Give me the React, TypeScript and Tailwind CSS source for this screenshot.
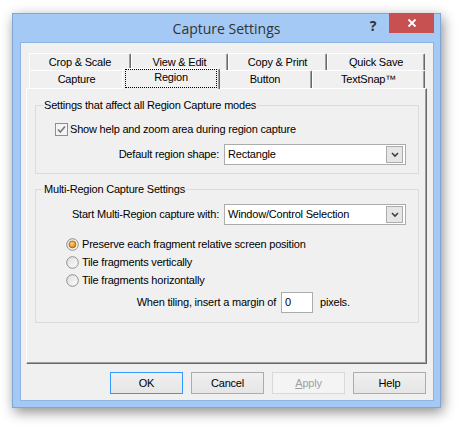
import React from "react";

const body = { fontFamily: '"Liberation Sans", Arial, sans-serif' };

function Tab({ label, w, h, selected }: { label: string; w: string; h: string; selected?: boolean }) {
  if (selected) {
    return (
      <div className={`${w} h-[21px] -mx-[2px] -mt-[2px] -mb-[1px] relative z-10 bg-[#f0f0f0] border-t border-l border-white border-r border-r-[#696969] shadow-[inset_-1px_0_0_#a0a0a0] rounded-t-[2px] px-[2px] pt-[0px] pb-[1px]`}>
        <div className="h-[19px] border border-dotted border-black flex items-center justify-center pb-[2px]">{label}</div>
      </div>
    );
  }
  return (
    <div className={`${w} ${h} bg-[#f0f0f0] border-t border-l border-white border-r border-r-[#696969] shadow-[inset_-1px_0_0_#a0a0a0] rounded-t-[2px] flex items-center justify-center`}>
      {label}
    </div>
  );
}

function Combo({ value }: { value: string }) {
  return (
    <div className="w-[182px] h-[21px] bg-white border border-[#acacac] flex items-center justify-between pl-[3px] pr-[2px]">
      <span>{value}</span>
      <div className="w-[17px] h-[17px] border border-[#acacac] bg-[#e6e6e6] flex items-center justify-center">
        <svg width="8" height="6" viewBox="0 0 8 6">
          <path d="M1 1 L4 4 L7 1" fill="none" stroke="#404040" strokeWidth="1.6" />
        </svg>
      </div>
    </div>
  );
}

function Radio({ checked }: { checked?: boolean }) {
  return (
    <svg width="13" height="13" viewBox="0 0 13 13">
      <defs>
        <linearGradient id="rg" x1="0" y1="0" x2="1" y2="1">
          <stop offset="0" stopColor="#dcdcdc" />
          <stop offset="1" stopColor="#ffffff" />
        </linearGradient>
        <radialGradient id="ro" cx="0.4" cy="0.35" r="0.7">
          <stop offset="0" stopColor="#ffd27a" />
          <stop offset="1" stopColor="#e07b00" />
        </radialGradient>
      </defs>
      <circle cx="6.5" cy="6.5" r="5.8" fill="url(#rg)" stroke="#8f8f8f" strokeWidth="1" />
      {checked && <circle cx="6.5" cy="6.5" r="3.4" fill="url(#ro)" stroke="#a85a10" strokeWidth="0.8" />}
    </svg>
  );
}

function Btn({ label, focused, disabled }: { label: React.ReactNode; focused?: boolean; disabled?: boolean }) {
  const border = focused ? "border-[#3399ff]" : disabled ? "border-[#d9d9d9]" : "border-[#acacac]";
  const bg = disabled ? "bg-[#f4f4f4] text-[#a0a0a0]" : "bg-gradient-to-b from-[#f0f0f0] to-[#e5e5e5] text-black";
  return (
    <div className={`w-[73px] h-[22px] border ${border} ${bg} flex items-center justify-center`}>{label}</div>
  );
}

export default function App() {
  return (
    <div className="w-[461px] h-[429px] bg-white pt-[13px] pl-[12px] text-[11px] tracking-[-0.2px] text-black" style={body}>
      <div className="w-[429px] h-[395px] border border-[#7fa6d4] bg-[#a4c9f4] shadow-[2px_4px_12px_rgba(0,0,0,0.45)] flex flex-col">
        <div className="h-[28px] flex items-start">
          <div className="flex-1 h-[28px] flex items-center justify-center text-[14px] tracking-normal text-[#333] pt-[1px]" style={{ fontFamily: '"Open Sans", "Noto Sans", sans-serif' }}>
            <span className="ml-[74px]">Capture Settings</span>
          </div>
          <div className="w-[14px] h-[20px] flex items-center justify-center text-[14px] font-bold text-[#333] mt-[1px]" style={{ fontFamily: '"Noto Sans", sans-serif' }}>?</div>
          <div className="w-[45px] h-[20px] bg-[#c75050] ml-[9px] mr-[6px] -mt-px flex items-center justify-center">
            <svg width="10" height="10" viewBox="0 0 10 10">
              <path d="M1.5 1.5 L8.5 8.5 M8.5 1.5 L1.5 8.5" stroke="white" strokeWidth="1.8" />
            </svg>
          </div>
        </div>
        <div className="ml-[7px] w-[414px] h-[359px] bg-[#f0f0f0] border border-[#8cb3e2] flex flex-col">
          <div className="ml-[8px] mt-[10px] flex">
            <Tab label="Crop & Scale" w="w-[102px]" h="h-[17px]" />
            <Tab label="View & Edit" w="w-[97px]" h="h-[17px]" />
            <Tab label="Copy & Print" w="w-[99px]" h="h-[17px]" />
            <Tab label="Quick Save" w="w-[98px]" h="h-[17px]" />
          </div>
          <div className="ml-[8px] flex">
            <Tab label="Capture" w="w-[95px]" h="h-[18px]" />
            <Tab label="Region" w="w-[98px]" h="h-[18px]" selected />
            <Tab label="Button" w="w-[94px]" h="h-[18px]" />
            <Tab label="TextSnap™" w="w-[113px]" h="h-[18px]" />
          </div>
          <div className="ml-[5px] w-[401px] h-[276px] border-t border-l border-white border-r border-b border-r-[#696969] border-b-[#696969] shadow-[inset_-1px_-1px_0_#a0a0a0] flex flex-col">
            <div className="ml-[8px] mt-[16px] w-[384px] border border-[#dcdcdc] flex flex-col pb-[8px]">
              <div className="-mt-[7px] ml-[7px] px-[1px] bg-[#f0f0f0] w-fit leading-[13px]">Settings that affect all Region Capture modes</div>
              <div className="mt-[11px] ml-[19px] flex items-center h-[13px] gap-[2px]">
                <svg width="13" height="13" viewBox="0 0 13 13">
                  <rect x="0.5" y="0.5" width="12" height="12" fill="#f4f4f4" stroke="#8f8f8f" />
                  <path d="M3 6.5 L5.3 9 L10 3.5" fill="none" stroke="#7a7a7a" strokeWidth="1.7" />
                </svg>
                <span>Show help and zoom area during region capture</span>
              </div>
              <div className="mt-[8px] flex items-center">
                <div className="w-[183px] text-right">Default region shape:</div>
                <div className="ml-[5px]">
                  <Combo value="Rectangle" />
                </div>
              </div>
            </div>
            <div className="ml-[8px] mt-[15px] w-[384px] border border-[#dcdcdc] flex flex-col pb-[9px]">
              <div className="-mt-[7px] ml-[7px] px-[1px] bg-[#f0f0f0] w-fit leading-[13px]">Multi-Region Capture Settings</div>
              <div className="mt-[8px] flex items-center">
                <div className="w-[183px] text-right">Start Multi-Region capture with:</div>
                <div className="ml-[5px]">
                  <Combo value="Window/Control Selection" />
                </div>
              </div>
              <div className="mt-[10px] ml-[30px] flex flex-col">
                {[
                  ["Preserve each fragment relative screen position", true],
                  ["Tile fragments vertically", false],
                  ["Tile fragments horizontally", false],
                ].map(([t, c]) => (
                  <div key={t as string} className="h-[18px] flex items-center gap-[3px]">
                    <Radio checked={c as boolean} />
                    <span>{t as string}</span>
                  </div>
                ))}
              </div>
              <div className="mt-[3px] flex items-center">
                <div className="w-[240px] text-right">When tiling, insert a margin of</div>
                <div className="ml-[5px] w-[32px] h-[21px] bg-white border border-[#acacac] flex items-center pl-[3px]">0</div>
                <div className="ml-[7px]">pixels.</div>
              </div>
            </div>
          </div>
          <div className="mt-[8px] ml-[89px] flex gap-[8px]">
            <Btn label="OK" focused />
            <Btn label="Cancel" />
            <Btn label={<span><span className="underline">A</span>pply</span>} disabled />
            <Btn label="Help" />
          </div>
        </div>
      </div>
    </div>
  );
}
